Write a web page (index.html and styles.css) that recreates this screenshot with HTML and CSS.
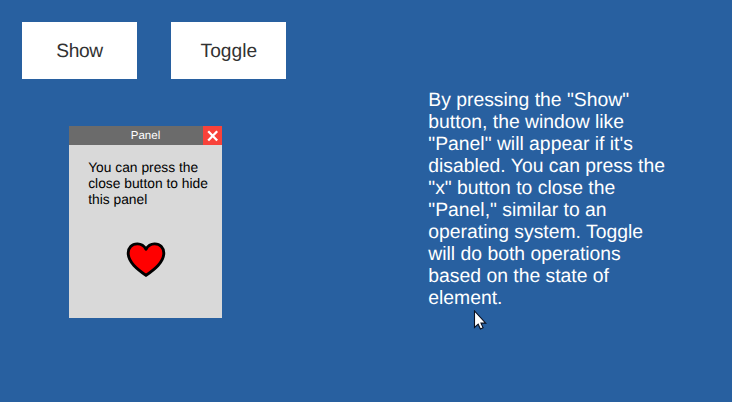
FILE: index.html
```html
<!DOCTYPE html>
<html lang="en">
<head>
<meta charset="utf-8">
<title>Panel</title>
<link rel="stylesheet" href="styles.css">
</head>
<body>
<main class="scene">
  <section class="left">
    <div class="buttons">
      <button class="btn btn-show">Show</button>
      <button class="btn">Toggle</button>
    </div>
    <div class="panel">
      <header class="titlebar">
        <span class="title">Panel</span>
        <button class="close" aria-label="Close"><svg width="19" height="19" viewBox="0 0 19 19"><path d="M5.200 5.200 14.200 14.500M14.200 5.200 5.200 14.500" stroke="#fff" stroke-width="2.300" fill="none"/></svg></button>
      </header>
      <p class="message">You can press the<br>close button to hide<br>this panel</p>
      <svg class="heart" width="40" height="36" viewBox="0 0 40 36"><path d="M20 7.200C17.700 3 14.500 1.800 11.200 1.900 5.800 2 2.200 6 2.200 11c0 9.400 9.400 16.300 17.800 22.400C28.400 27.300 37.800 20.400 37.800 11c0-5-3.600-9-9-9.100C25.500 1.800 22.300 3 20 7.200Z" fill="#f00" stroke="#000" stroke-width="2.900" stroke-linejoin="round"/></svg>
    </div>
  </section>
  <p class="description">By pressing the "Show"<br>button, the window like<br>"Panel" will appear if it's<br>disabled. You can press the<br>"x" button to close the<br>"Panel," similar to an<br>operating system. Toggle<br>will do both operations<br>based on the state of<br>element.</p>
  <svg class="cursor" width="14" height="21" viewBox="0 0 14 21"><path d="M1.500 1v16.500l3.700-3.300 2.200 4.800 2.700-1.200-2.100-4.700H12.700Z" fill="#fff" stroke="#0a1020" stroke-width="1.100"/></svg>
</main>
</body>
</html>
```
FILE: styles.css
```css
* {
  box-sizing: border-box;
}

body {
  margin: 0;
  font-family: "Liberation Sans", Arial, sans-serif;
  text-rendering: geometricPrecision;
}

.scene {
  position: relative;
  display: flex;
  width: 732px;
  height: 402px;
  overflow: hidden;
  background: #2860a0;
}

.left {
  width: 428.3px;
  flex: none;
  padding: 22px 0 0 22px;
}

.buttons {
  display: flex;
  gap: 34.4px;
}

.btn {
  width: 115px;
  height: 57.4px;
  padding: 1px 0 0;
  border: 0;
  background: #fff;
  color: #323232;
  font: 19.2px/57px "Liberation Sans", Arial, sans-serif;
  text-rendering: geometricPrecision;
}

.btn-show {
  letter-spacing: -0.4px;
}

.panel {
  display: flex;
  flex-direction: column;
  width: 153.4px;
  height: 192px;
  margin: 46.6px 0 0 47px;
  background: #d9d9d9;
}

.titlebar {
  display: flex;
  height: 19px;
  flex: none;
  background: #6b6b6b;
  color: #fff;
  font-size: 11.5px;
  line-height: 21px;
}

.title {
  flex: 1;
  padding-left: 19px;
  text-align: center;
}

.close {
  width: 19.4px;
  height: 19px;
  padding: 0;
  border: 0;
  background: #f8423a;
}

.close svg,
.heart {
  display: block;
}

.message {
  margin: 15px 0 0 19.2px;
  color: #000;
  font-size: 13.8px;
  line-height: 16px;
  white-space: nowrap;
}

.heart {
  margin: 34.5px 0 0 57px;
}

.description {
  margin: 89px 0 0;
  color: #fff;
  font-size: 19.35px;
  line-height: 22px;
  white-space: nowrap;
}

.cursor {
  position: absolute;
  left: 473px;
  top: 309.5px;
}
```
